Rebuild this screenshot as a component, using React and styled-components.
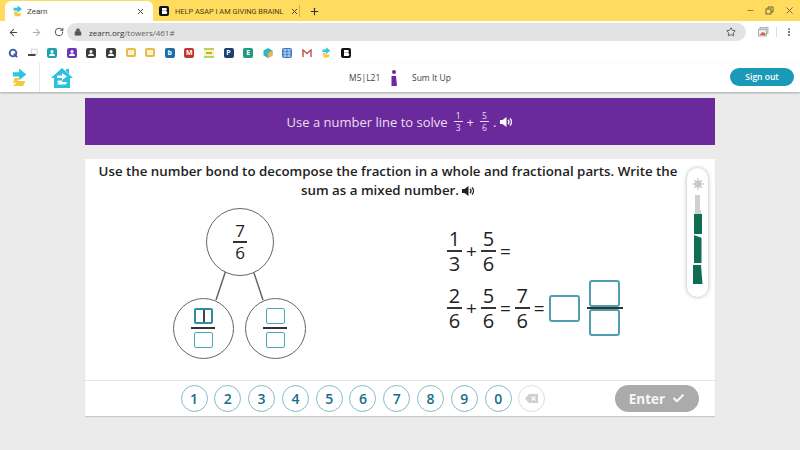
import React from "react"
import styled, { createGlobalStyle } from "styled-components"
import { ArrowLeft, ArrowRight, RotateCw, Lock, Star, X, Plus, Minus, MoreVertical, Check } from "lucide-react"

const GlobalStyle = createGlobalStyle`
  html, body { margin: 0; padding: 0; }
  body { width: 800px; height: 450px; overflow: hidden; background: #ebebeb; font-family: "Open Sans", "Liberation Sans", sans-serif; }
  svg { flex: none; }
`

const Page = styled.div`
  width: 800px;
  height: 450px;
  display: flex;
  flex-direction: column;
  overflow: hidden;
`

/* browser chrome */
const TabStrip = styled.div`
  height: 21px;
  flex: none;
  background: #ffdc5e;
  display: flex;
  align-items: flex-end;
  padding-left: 5px;
  font-family: Roboto, "Liberation Sans", sans-serif;
`
const ActiveTab = styled.div`
  width: 148px;
  height: 20px;
  flex: none;
  background: #fff;
  border-radius: 6px 6px 0 0;
  display: flex;
  align-items: center;
  padding: 0 8px;
  box-sizing: border-box;
  gap: 5px;
  font-size: 8px;
  color: #444;
`
const OtherTab = styled.div`
  width: 146px;
  height: 20px;
  flex: none;
  display: flex;
  align-items: center;
  padding: 0 7px 0 6px;
  box-sizing: border-box;
  gap: 6px;
  font-size: 7.4px;
  color: #4a3f10;
  white-space: nowrap;
`
const TabTitle = styled.span`
  flex: 1;
`
const TabDivider = styled.div`
  width: 1px;
  height: 12px;
  margin: 0 0 4px 0;
  background: #c9b04e;
`
const NewTab = styled.div`
  height: 20px;
  margin-left: 9px;
  display: flex;
  align-items: center;
  color: #333;
`
const WindowButtons = styled.div`
  margin-left: auto;
  height: 21px;
  display: flex;
  align-items: center;
  gap: 10px;
  padding-right: 5px;
  color: #6b6440;
`
const Toolbar = styled.div`
  height: 21px;
  flex: none;
  padding-top: 1px;
  box-sizing: border-box;
  background: #fff;
  display: flex;
  align-items: center;
  color: #444;
`
const NavIcons = styled.div`
  width: 67px;
  flex: none;
  display: flex;
  align-items: center;
  gap: 12px;
  padding-left: 8px;
  box-sizing: border-box;
`
const UrlBar = styled.div`
  flex: 1;
  height: 18px;
  border-radius: 9px;
  background: #e3e3e3;
  display: flex;
  align-items: center;
  padding: 0 10px 0 7px;
  gap: 7px;
  font-size: 8px;
  color: #666;
`
const UrlHost = styled.span`
  color: #333;
`
const UrlEnd = styled.span`
  margin-left: auto;
  display: flex;
  color: #444;
`
const ToolbarEnd = styled.div`
  width: 54px;
  flex: none;
  display: flex;
  align-items: center;
  justify-content: flex-end;
  gap: 7px;
  padding-right: 6px;
  box-sizing: border-box;
`
const ToolbarSep = styled.div`
  width: 1px;
  height: 10px;
  background: #ddd;
`
const Bookmarks = styled.div`
  height: 21px;
  flex: none;
  background: #fff;
  display: flex;
  align-items: center;
  gap: 9.6px;
  padding-left: 8px;
`
const Bookmark = styled.div`
  width: 10px;
  height: 10px;
  flex: none;
  border-radius: 2px;
  background: ${p => p.$c};
  display: flex;
  align-items: center;
  justify-content: center;
  font-size: 7px;
  font-weight: 700;
  line-height: 1;
  color: #fff;
`
const YellowFrame = styled.div`
  width: 10px;
  height: 9px;
  flex: none;
  border-radius: 2px;
  background: #fdf3d0;
  border: 2px solid #e8bd45;
  box-sizing: border-box;
`

/* zearn header */
const AppHeader = styled.header`
  height: 29px;
  flex: none;
  background: #fff;
  box-shadow: 0 1px 2px rgba(0, 0, 0, .3);
  display: flex;
  align-items: center;
`
const LogoCell = styled.div`
  width: 40px;
  height: 29px;
  flex: none;
  display: flex;
  align-items: center;
  justify-content: center;
  border-right: 1px solid #e6e6e6;
  box-sizing: border-box;
`
const HomeCell = styled.div`
  width: 44px;
  flex: none;
  display: flex;
  justify-content: center;
`
const LessonInfo = styled.div`
  flex: 1;
  display: flex;
  align-items: center;
  font-size: 8.5px;
  color: #444;
  padding-left: 265px;
  height: 29px;
`
const LessonCode = styled.span`
  width: 41px;
`
const LessonName = styled.span`
  margin-left: 14px;
`
const SignOut = styled.div`
  width: 64px;
  height: 18px;
  flex: none;
  margin: 0 6px 2px 0;
  border-radius: 9px;
  background: #1b9ab8;
  color: #fff;
  font-size: 8.5px;
  font-weight: 600;
  display: flex;
  align-items: center;
  justify-content: center;
`

/* lesson */
const Main = styled.main`
  flex: 1;
  display: flex;
  flex-direction: column;
  width: 630px;
  margin-left: 85px;
  padding-top: 6px;
`
const Banner = styled.div`
  height: 47px;
  flex: none;
  background: #6b2a9b;
  color: #eadff2;
  display: flex;
  align-items: center;
  justify-content: center;
  gap: 4px;
  font-size: 13px;
`
const BannerFrac = styled.span`
  display: inline-flex;
  flex-direction: column;
  align-items: center;
  font-size: 8.5px;
  line-height: 11px;
  margin-left: 2px;
  width: 9px;
`
const BannerBar = styled.span`
  width: 100%;
  height: 1px;
  background: #e8dcf0;
`
const Card = styled.section`
  margin-top: 14px;
  height: 257px;
  flex: none;
  background: #fff;
  box-shadow: 0 1px 1px rgba(0, 0, 0, .15);
  display: flex;
  flex-direction: column;
  position: relative;
`
const Prompt = styled.h2`
  margin: 3px 0 0;
  padding: 0 24px 0 0;
  font-size: 13.3px;
  line-height: 19px;
  font-weight: 600;
  color: #222;
  text-align: center;
`
const Speaker = styled.span`
  display: inline-flex;
  margin-left: ${p => p.$ml ?? 3}px;
  vertical-align: -1px;
`
const Workspace = styled.div`
  flex: 1;
  display: flex;
`
const Bond = styled.div`
  position: relative;
  width: 360px;
`
const BondLines = styled.svg`
  position: absolute;
  left: 0;
  top: 0;
`
const BondNode = styled.div`
  position: absolute;
  left: ${p => p.$x - p.$r}px;
  top: ${p => p.$y - p.$r}px;
  width: ${p => p.$r * 2}px;
  height: ${p => p.$r * 2}px;
  box-sizing: border-box;
  border: 1.5px solid #666;
  border-radius: 50%;
  background: #fff;
  display: flex;
  align-items: center;
  justify-content: center;
`
const Frac = styled.div`
  display: inline-flex;
  flex-direction: column;
  align-items: center;
  font-size: ${p => p.$size || 20}px;
  line-height: ${p => Math.round((p.$size || 20) * 1.15)}px;
  color: #222;
`
const FracBar = styled.div`
  width: ${p => p.$w || 15}px;
  height: 1.5px;
  background: #333;
  flex: none;
`
const InputBox = styled.div`
  width: ${p => p.$w || 19}px;
  height: ${p => p.$h || 16}px;
  box-sizing: border-box;
  border: ${p => (p.$active ? "2px solid #2b8ea3" : "1px solid #4fa6b6")};
  border-radius: 2px;
  margin: 3px 0;
  background: #fff;
  position: relative;
  &::after {
    content: "";
    display: ${p => (p.$active ? "block" : "none")};
    position: absolute;
    left: 50%;
    top: 0;
    bottom: 0;
    width: 1.5px;
    background: #444;
  }
`
const AnswerBox = styled.div`
  width: 31px;
  height: 27px;
  flex: none;
  box-sizing: border-box;
  border: 2px solid #4f9fae;
  border-radius: 3px;
  background: #fff;
`
const Equations = styled.div`
  width: 240px;
  padding-top: 26px;
  display: flex;
  flex-direction: column;
  gap: 7px;
  margin-left: 2px;
`
const EqRow = styled.div`
  height: 50px;
  display: flex;
  align-items: center;
  gap: 4px;
  font-size: 19px;
  color: #222;
`
const MixedBox = styled.div`
  display: flex;
  flex-direction: column;
  align-items: center;
  margin-left: 3px;
`
const MixedBar = styled.div`
  width: 36px;
  height: 2px;
  background: #333;
  position: relative;
  z-index: 1;
`
const Meter = styled.div`
  position: absolute;
  top: 9px;
  left: 602px;
  width: 21px;
  height: 129px;
  border-radius: 11px;
  background: #fff;
  box-shadow: 0 0 4px rgba(0, 0, 0, .3);
  display: flex;
  flex-direction: column;
  align-items: center;
  padding-top: 10px;
  box-sizing: border-box;
`
const MeterBar = styled.div`
  width: ${p => p.$w}px;
  height: ${p => p.$h}px;
  background: ${p => p.$c};
  margin-top: ${p => p.$gap}px;
  flex: none;
  clip-path: ${p => p.$clip || "none"};
`
const Keypad = styled.div`
  height: 35px;
  flex: none;
  border-top: 1px solid #e8e8e8;
  display: flex;
  align-items: center;
  padding-left: 95.5px;
`
const Keys = styled.div`
  display: flex;
  gap: 6.8px;
`
const Key = styled.div`
  width: 27px;
  height: 27px;
  box-sizing: border-box;
  border: 1px solid ${p => (p.$muted ? "#dcdcdc" : "#7fbcc6")};
  border-radius: 50%;
  color: #156f88;
  font-size: 14px;
  font-weight: 600;
  display: flex;
  align-items: center;
  justify-content: center;
`
const EnterButton = styled.div`
  width: 84px;
  height: 27px;
  margin-left: auto;
  margin-right: 16px;
  border-radius: 14px;
  background: #ababab;
  color: #f7f7f7;
  font-size: 13.5px;
  font-weight: 700;
  display: flex;
  align-items: center;
  justify-content: center;
  gap: 7px;
`

const ZearnMark = ({ size = 16 }) => (
  <svg width={size * 0.75} height={size} viewBox="0 0 16 20">
    <path d="M1 4h7V0l8 6.500L8 13V9H1z" fill="#2cc5e2" />
    <path d="M3 10.500h6.500L6 14h9l-2.500 5.500H1L5 16H1z" fill="#f5c842" />
  </svg>
)

const HomeMark = () => (
  <svg width="22" height="20" viewBox="0 0 22 20">
    <path d="M11 0 22 10h-3v10H3V10H0zM15 1h3v5l-3-3z" fill="#2cc0dd" />
    <path d="M6 7.500h5V5l5 3.500-5 3.500V10H6zM7 12.500h5l-1.500 1.500H16l-1 2.500H6l2-2H6z" fill="#fff" />
  </svg>
)

const SpeakerIcon = ({ color = "#222" }) => (
  <svg width="13" height="10" viewBox="0 0 13 10">
    <path d="M0 3h2.500L6.500 0v10L2.500 7H0z" fill={color} />
    <path d="M8 3a2.500 2.500 0 0 1 0 4M10 1.500a5 5 0 0 1 0 7" fill="none" stroke={color} strokeWidth="1.400" />
  </svg>
)

const BookOutline = () => (
  <svg width="10" height="10" viewBox="0 0 10 10">
    <rect width="10" height="10" rx="2" fill="#111" />
    <path d="M3 2h3.500a1.200 1.200 0 0 1 0 2.800H3zM3 5h3.800a1.200 1.200 0 0 1 0 3H3z" fill="#fff" />
  </svg>
)

const PersonTile = ({ c }) => (
  <Bookmark $c={c}>
    <svg width="8" height="8" viewBox="0 0 8 8">
      <circle cx="4" cy="2.500" r="1.500" fill="#fff" />
      <path d="M1 7a3 2.500 0 0 1 6 0z" fill="#fff" />
    </svg>
  </Bookmark>
)

const Fraction = ({ top, bottom, size, w }) => (
  <Frac $size={size || 20}>
    {top}
    <FracBar $w={w} />
    {bottom}
  </Frac>
)

const BoxFraction = ({ active }) => (
  <Frac>
    <InputBox $active={active} />
    <FracBar $w={24} />
    <InputBox />
  </Frac>
)

const App = () => {
  return (
    <Page>
      <GlobalStyle />
      <TabStrip>
        <ActiveTab>
          <ZearnMark size={12} />
          <TabTitle>Zearn</TabTitle>
          <X size={9} strokeWidth={2.500} />
        </ActiveTab>
        <OtherTab>
          <BookOutline />
          <TabTitle>HELP ASAP I AM GIVING BRAINL</TabTitle>
          <X size={9} strokeWidth={2.500} />
        </OtherTab>
        <TabDivider />
        <NewTab><Plus size={11} strokeWidth={2.500} /></NewTab>
        <WindowButtons>
          <Minus size={9} />
          <svg width="9" height="9" viewBox="0 0 9 9" fill="none" stroke="currentColor">
            <rect x="1" y="3" width="5" height="5" />
            <path d="M3 3V1h5v5H6" />
          </svg>
          <X size={11} />
        </WindowButtons>
      </TabStrip>
      <Toolbar>
        <NavIcons>
          <ArrowLeft size={11} strokeWidth={2.200} />
          <ArrowRight size={11} color="#aaa" strokeWidth={2.200} />
          <RotateCw size={10} strokeWidth={2.200} />
        </NavIcons>
        <UrlBar>
          <Lock size={8} fill="#555" />
          <span><UrlHost>zearn.org</UrlHost>/towers/461#</span>
          <UrlEnd><Star size={10} /></UrlEnd>
        </UrlBar>
        <ToolbarEnd>
          <svg width="11" height="10" viewBox="0 0 11 10">
            <rect x="2" y="0.500" width="8" height="6" fill="#ddd" stroke="#999" strokeWidth=".7" />
            <rect x="0.500" y="2.500" width="8" height="6.500" fill="#eee" stroke="#999" strokeWidth=".7" />
            <path d="M1.500 8l3-3 3 1.500v2z" fill="#d6604d" />
          </svg>
          <ToolbarSep />
          <MoreVertical size={10} strokeWidth={2.500} />
        </ToolbarEnd>
      </Toolbar>
      <Bookmarks>
        <Bookmark $c="#fff"><svg width="10" height="10" viewBox="0 0 12 12"><circle cx="6" cy="6" r="4" fill="none" stroke="#3c5aa6" strokeWidth="2.200" /><path d="M7 7l4 4" stroke="#3c5aa6" strokeWidth="2" /></svg></Bookmark>
        <Bookmark $c="#fff"><svg width="10" height="9" viewBox="0 0 12 10"><rect x="4" y="1" width="7" height="6" fill="#fff" stroke="#ccc" /><rect x="0" y="7" width="9" height="2" fill="#222" /></svg></Bookmark>
        <PersonTile c="#1f9fb0" />
        <PersonTile c="#6d36b8" />
        <PersonTile c="#3b3b3b" />
        <PersonTile c="#3b3b3b" />
        <YellowFrame />
        <YellowFrame />
        <Bookmark $c="#1b6ea8">b</Bookmark>
        <Bookmark $c="#c5352f">M</Bookmark>
        <Bookmark $c="#f2f5c8"><svg width="10" height="10" viewBox="0 0 10 10"><path d="M0 1h10M0 9h10" stroke="#a5c63b" strokeWidth="1.500" /><path d="M2 5h6" stroke="#e0a030" strokeWidth="2" /></svg></Bookmark>
        <Bookmark $c="#1d3f72">P</Bookmark>
        <Bookmark $c="#1f9a7c">E</Bookmark>
        <Bookmark $c="#fff"><svg width="10" height="10" viewBox="0 0 10 10"><path d="M5 0l4.500 2.500v5L5 10 .5 7.500v-5z" fill="#35b6c4" /><path d="M5 5l4.500-2.500v5L5 10z" fill="#f0b050" /></svg></Bookmark>
        <Bookmark $c="#3f7cc4"><svg width="10" height="10" viewBox="0 0 10 10"><path d="M1 2h8M1 5h8M1 8h8M3 1v8M7 1v8" stroke="#d8ebfa" strokeWidth=".8" /></svg></Bookmark>
        <Bookmark $c="#fff"><svg width="10" height="8" viewBox="0 0 10 8"><path d="M1 8V1l4 3.500L9 1v7" fill="none" stroke="#c85a4c" strokeWidth="1.500" /></svg></Bookmark>
        <Bookmark $c="#fff"><ZearnMark size={11} /></Bookmark>
        <BookOutline />
      </Bookmarks>
      <AppHeader>
        <LogoCell><ZearnMark size={19} /></LogoCell>
        <HomeCell><HomeMark /></HomeCell>
        <LessonInfo>
          <LessonCode>M5|L21</LessonCode>
          <svg width="8" height="18" viewBox="0 0 8 18">
            <circle cx="4" cy="3" r="2" fill="#6d2a9e" />
            <path d="M1.500 7h4.500l1 10H1.500z" fill="#6d2a9e" />
          </svg>
          <LessonName>Sum It Up</LessonName>
        </LessonInfo>
        <SignOut>Sign out</SignOut>
      </AppHeader>
      <Main>
        <Banner>
          Use a number line to solve
          <BannerFrac>1<BannerBar />3</BannerFrac>
          +
          <BannerFrac>5<BannerBar />6</BannerFrac>
          .
          <Speaker $ml={0}><SpeakerIcon color="#fff" /></Speaker>
        </Banner>
        <Card>
          <Prompt>
            Use the number bond to decompose the fraction in a whole and fractional parts. Write the sum as a mixed number.
            <Speaker><SpeakerIcon /></Speaker>
          </Prompt>
          <Workspace>
            <Bond>
              <BondLines width="360" height="170">
                <path d="M141 70 L131 100 M168 70 L178 100" stroke="#666" strokeWidth="1.500" fill="none" />
              </BondLines>
              <BondNode $x={155} $y={42} $r={34}>
                <Fraction top="7" bottom="6" size={17} w={14} />
              </BondNode>
              <BondNode $x={118} $y={128} $r={30.500}>
                <BoxFraction active />
              </BondNode>
              <BondNode $x={190} $y={128} $r={30.500}>
                <BoxFraction />
              </BondNode>
            </Bond>
            <Equations>
              <EqRow>
                <Fraction top="1" bottom="3" />
                +
                <Fraction top="5" bottom="6" />
                =
              </EqRow>
              <EqRow>
                <Fraction top="2" bottom="6" />
                +
                <Fraction top="5" bottom="6" />
                =
                <Fraction top="7" bottom="6" />
                =
                <AnswerBox />
                <MixedBox>
                  <AnswerBox />
                  <MixedBar />
                  <AnswerBox />
                </MixedBox>
              </EqRow>
            </Equations>
          </Workspace>
          <Meter>
            <svg width="12" height="12" viewBox="0 0 12 12">
              <g stroke="#c8c8c8" strokeWidth="1.200">
                <path d="M6 0v12M0 6h12M1.800 1.800l8.400 8.400M10.200 1.800l-8.400 8.400" />
              </g>
              <circle cx="6" cy="6" r="3.500" fill="#c8c8c8" />
            </svg>
            <MeterBar $w={4.500} $h={15} $c="#d0d0d0" $gap={5} />
            <MeterBar $w={6} $h={4} $c="#d0d0d0" $gap={0} />
            <MeterBar $w={8} $h={20} $c="#0f6e52" $gap={0} />
            <MeterBar $w={8} $h={28} $c="#0f6e52" $gap={1} $clip="polygon(0 0, 100% 10%, 100% 100%, 0 100%)" />
            <MeterBar $w={10} $h={19} $c="#0f6e52" $gap={2} $clip="polygon(0 0, 85% 0, 100% 100%, 0 100%)" />
          </Meter>
          <Keypad>
            <Keys>
              {["1", "2", "3", "4", "5", "6", "7", "8", "9", "0"].map(k => <Key key={k}>{k}</Key>)}
              <Key $muted>
                <svg width="13" height="9" viewBox="0 0 13 9">
                  <path d="M4 0h9v9H4L0 4.500z" fill="#cfcfcf" />
                  <path d="M6.500 2.500l4 4M10.500 2.500l-4 4" stroke="#fff" strokeWidth="1.200" />
                </svg>
              </Key>
            </Keys>
            <EnterButton>Enter <Check size={13} strokeWidth={4} /></EnterButton>
          </Keypad>
        </Card>
      </Main>
    </Page>
  )
}

export default App
